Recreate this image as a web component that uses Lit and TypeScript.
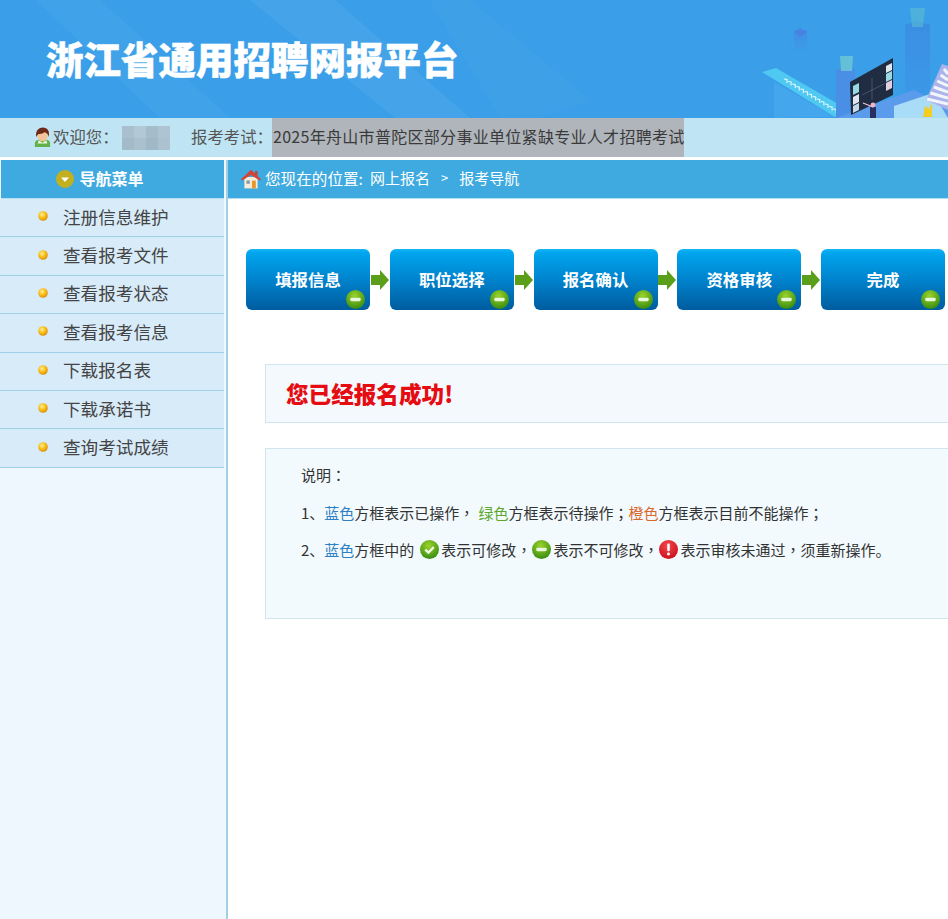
import { LitElement, html, css, svg } from "lit";
import { customElement } from "lit/decorators.js";

const menu = ["注册信息维护", "查看报考文件", "查看报考状态", "查看报考信息", "下载报名表", "下载承诺书", "查询考试成绩"];
const steps = ["填报信息", "职位选择", "报名确认", "资格审核", "完成"];

const blurCells = ["#a9bfce", "#b3c8d6", "#a5bccb", "#aec4d3", "#a3bac9", "#aac0cf", "#a1b8c8", "#acc2d1"];

// full-width punctuation
const COMMA = "\uFF0C";
const SEMI = "\uFF1B";
const COLON = "\uFF1A";

const defs = svg`
  <radialGradient id="gr" cx="45%" cy="30%" r="75%">
    <stop offset="0" stop-color="#9ad32c"/><stop offset="1" stop-color="#33880f"/>
  </radialGradient>
  <radialGradient id="rd" cx="45%" cy="30%" r="75%">
    <stop offset="0" stop-color="#f4474d"/><stop offset="1" stop-color="#c90d18"/>
  </radialGradient>
  <radialGradient id="yl" cx="40%" cy="35%" r="70%">
    <stop offset="0" stop-color="#fff0a0"/><stop offset=".45" stop-color="#fdc31c"/><stop offset="1" stop-color="#d98a06"/>
  </radialGradient>
  <linearGradient id="fade" x1="0" y1="0" x2="0" y2="1">
    <stop offset="0" stop-color="#4a7fe2" stop-opacity=".55"/><stop offset="1" stop-color="#4a7fe2" stop-opacity="0"/>
  </linearGradient>
  <linearGradient id="tower" x1="0" y1="0" x2="0" y2="1">
    <stop offset="0" stop-color="#3b8fe2"/><stop offset="1" stop-color="#3d9bea"/>
  </linearGradient>
`;

const minusIcon = html`<svg viewBox="0 0 18 18" width="19" height="19">
  <circle cx="9" cy="9" r="9" fill="url(#gr)"/><rect x="4" y="7.4" width="10" height="3.2" rx="1.4" fill="#e9f5dc"/>
</svg>`;
const checkIcon = html`<svg viewBox="0 0 18 18" width="19" height="19">
  <circle cx="9" cy="9" r="9" fill="url(#gr)"/><path d="M5 9.2l3 2.8 5-5.2" fill="none" stroke="#f2f9e8" stroke-width="2.2"/>
</svg>`;
const alertIcon = html`<svg viewBox="0 0 18 18" width="19" height="19">
  <circle cx="9" cy="9" r="9" fill="url(#rd)"/><rect x="7.8" y="3.4" width="2.4" height="7.2" rx="1" fill="#fff"/><circle cx="9" cy="13.2" r="1.4" fill="#fff"/>
</svg>`;

@customElement("app-root")
export class AppRoot extends LitElement {
  static styles = css`
    :host {
      display: block;
      min-height: 919px;
      background: #fff;
      overflow: hidden;
      font-family: "Noto Sans CJK SC", "Liberation Sans", sans-serif;
      color: #444;
    }

    .banner {
      position: relative;
      height: 118px;
      display: flex;
      align-items: center;
      padding-left: 46px;
      background: #3a9fe8;
      overflow: hidden;
    }
    .banner-art {
      position: absolute;
      left: 0;
      top: 0;
    }
    .banner h1 {
      position: relative;
      margin: 0 0 3px;
      font-size: 37.5px;
      line-height: 1;
      font-weight: 900;
      color: #fff;
      -webkit-text-stroke: 0.5px #fff;
    }

    .welcome {
      display: flex;
      align-items: stretch;
      height: 39px;
      background: #bfe5f4;
      border-bottom: 3px solid #fff;
      font-size: 16.4px;
      color: #555;
    }
    .welcome .who {
      display: flex;
      align-items: center;
      margin-left: 33px;
      gap: 1px;
      width: 89px;
      white-space: nowrap;
    }
    .welcome span,
    .exam-label,
    .exam {
      padding-bottom: 3px;
    }
    .blur {
      display: grid;
      grid-template-columns: repeat(4, 12px);
      grid-auto-rows: 12px;
      align-self: center;
      margin-right: 21px;
    }
    .exam-label {
      display: flex;
      align-items: center;
      width: 81px;
      white-space: nowrap;
    }
    .exam {
      display: flex;
      align-items: center;
      padding-left: 1px;
      width: 412px;
      box-sizing: border-box;
      background: #b0b5bb;
      color: #3a3a3a;
      font-size: 16px;
      white-space: nowrap;
      letter-spacing: 0.3px;
    }

    .body {
      display: flex;
      min-height: 759px;
    }

    .side {
      box-sizing: border-box;
      width: 228px;
      flex: none;
      background: #eef7fe;
      border-right: 2px solid #a2d0e6;
    }
    .side-head {
      box-sizing: border-box;
      display: flex;
      align-items: center;
      justify-content: center;
      gap: 5px;
      height: 39px;
      margin: 0 2px 0 1px;
      padding: 0 25px 2px 0;
      background: #3eaae0;
      border-bottom: 1px solid #b5def0;
      color: #fff;
      font-size: 16px;
      font-weight: 700;
    }
    .side-head svg {
      margin-bottom: -1px;
    }
    .side ul {
      list-style: none;
      margin: 0;
      padding: 0;
    }
    .side li {
      box-sizing: border-box;
      display: flex;
      align-items: center;
      height: 38.4px;
      margin-right: 2px;
      padding: 0 0 3px 38px;
      background: #d8ebf9;
      border-bottom: 1px solid #9fd0e6;
      font-size: 17.6px;
      color: #444;
    }
    .side li svg {
      margin-right: 15px;
      flex: none;
    }

    .main {
      flex: 1;
      min-width: 0;
    }
    .crumb {
      box-sizing: border-box;
      display: flex;
      align-items: center;
      height: 39px;
      padding: 0 0 3px 13px;
      background: #3eaae0;
      border-bottom: 1px solid #b5def0;
      color: #fff;
      font-size: 15px;
    }
    .crumb svg {
      margin: 2px 4px 0 0;
    }
    .crumb .sep {
      margin: 0 11px;
      font-size: 13px;
    }
    .crumb .here {
      margin-right: 7px;
      font-size: 15.6px;
    }

    .steps {
      display: flex;
      align-items: center;
      margin: 50px 0 0 18px;
    }
    .step {
      position: relative;
      flex: none;
      display: flex;
      align-items: center;
      justify-content: center;
      box-sizing: border-box;
      width: 124px;
      height: 61px;
      padding-bottom: 2px;
      border-radius: 6px;
      background: linear-gradient(#19b4f6 0, #00a6ee 6%, #0083cd 50%, #005c9f 100%);
      color: #fff;
      font-size: 16.4px;
      font-weight: 700;
    }
    .step .badge {
      position: absolute;
      display: flex;
      right: 5px;
      bottom: 1px;
    }
    .arrow {
      flex: none;
      width: 19.75px;
      display: flex;
      justify-content: center;
    }

    .panel {
      margin: 0 -10px 0 37px;
      border: 1px solid #cfe5f0;
    }
    .result {
      display: flex;
      align-items: center;
      box-sizing: border-box;
      height: 59px;
      margin-top: 54px;
      padding: 0 0 1px 20px;
      background: #f4f9fe;
      font-size: 22.6px;
      font-weight: 900;
      color: #e60d12;
    }
    .note {
      box-sizing: border-box;
      height: 171px;
      margin-top: 25px;
      padding: 7px 0 0 35px;
      background: #f2fafe;
      font-size: 15px;
      color: #333;
    }
    .note p {
      display: flex;
      align-items: center;
      height: 37.6px;
      margin: 0;
      white-space: pre;
    }
    .note svg {
      margin: 0 2px 0 1px;
    }
    .note .first {
      display: flex;
      margin-left: 5px;
    }
    /* centred full-width punctuation, the SC face pushes it to the corner */
    .pn { font-family: "Noto Sans CJK TC", "Noto Sans CJK SC", sans-serif; }
    .blue { color: #2f7fc4; }
    .green { color: #5fa72c; margin-left: 4px; }
    .orange { color: #d9682a; }
  `;

  private banner() {
    return html`<svg class="banner-art" width="948" height="118" viewBox="0 0 948 118">
      <polygon points="36,0 100,0 230,118 160,118" fill="#fff" opacity=".035"/>
      <polygon points="250,0 335,0 470,118 395,118" fill="#fff" opacity=".06"/>
      <polygon points="430,0 470,0 590,100 540,118 500,118" fill="#fff" opacity=".025"/>
      <g transform="translate(700 0)">
        <rect x="94" y="30" width="13" height="24" fill="url(#fade)"/>
        <polygon points="94,32 100,28 107,32 100,37" fill="#4a7fe2" opacity=".75"/>
        <rect x="205" y="24" width="25" height="94" fill="url(#tower)"/>
        <polygon points="205,26 217,20 230,26 217,32" fill="#3a8fe2"/>
        <polygon points="210,8 225,8 223,27 212,27" fill="#5cbfd0" opacity=".55"/>
        <polygon points="74,82 135,117 74,118" fill="#44a6ec"/>
        <polygon points="62,72 76,68 145,108 135,117" fill="#4fc8f2"/>
        ${[0, 1, 2, 3, 4, 5, 6, 7, 8, 9, 10, 11, 12].map((i) => svg`
          <polyline points="${84 + i * 4.1},${79 + i * 2.5} ${87 + i * 4.1},${79.5 + i * 2.5} ${87 + i * 4.1},${83 + i * 2.5}"
            fill="none" stroke="#e6fbff" stroke-width="1.1"/>`)}
        <rect x="136" y="69" width="19" height="49" fill="#4a8fe6"/>
        <polygon points="140,56 153,56 152,71 141,71" fill="#6cc5d6" opacity=".85"/>
        <polygon points="136,118 214,90 248,108 248,118" fill="#5b9bec"/>
        <polygon points="150,82 193,58 193,95 151,115" fill="#1f2c42"/>
        <polygon points="153,86 159,83 159,92 153,95" fill="#9ad8e2"/>
        <polygon points="153,97 159,94 159,102 153,105" fill="#dfe6ee"/>
        <polygon points="153,106 159,103 159,110 153,113" fill="#c5d8e4"/>
        <polygon points="186,66 192,63 192,70 186,73" fill="#dfe6ee"/>
        <polygon points="186,74 192,71 192,79 186,82" fill="#9ad8e2"/>
        <polygon points="186,83 192,80 192,88 186,91" fill="#e4cfe0"/>
        <path d="M162 95L184 84M172 78V100" stroke="#56657a" stroke-width=".7" fill="none"/>
        <rect x="170" y="107" width="6" height="11" fill="#27305e"/>
        <circle cx="173" cy="105" r="2.4" fill="#f1b4c4"/>
        <path d="M173 107l-10-4" stroke="#f3c1cf" stroke-width="1.3"/>
        <polygon points="194,106 233,93 248,118 194,118" fill="#a9dcf6"/>
        <polygon points="226,100 242,64 248,66 248,110" fill="#aab4ea"/>
        ${[0, 1, 2, 3, 4, 5].map((i) => svg`
          <line x1="${227 + i * 3.4}" y1="${99 - i * 6}" x2="${248}" y2="${104 - i * 6}" stroke="#f2f5fc" stroke-width="3"/>`)}
        <polygon points="223,117 225,106 229,109 232,103 232,117" fill="#f5cc20"/>
      </g>
    </svg>`;
  }

  private avatar() {
    return html`<svg viewBox="0 0 20 22" width="19" height="21">
      <path d="M2 21v-4c0-3 3-4 8-4s8 1 8 4v4z" fill="#62b24a"/>
      <path d="M6 14l4 2.4L14 14l1 3.4H5z" fill="#eef6df"/>
      <ellipse cx="10" cy="9.4" rx="5.4" ry="5.6" fill="#f3c497"/>
      <path d="M3.4 10.4C2.2 3.4 6.6.4 10.4.4c5 0 7.4 3.6 6.2 10-.8-2.8-2.4-4.4-4.4-4.8-2 1.6-5.4 2-6.8 2-.8.8-1.4 1.6-2 2.8z" fill="#6e2a18"/>
    </svg>`;
  }

  private house() {
    return html`<svg viewBox="0 0 20 20" width="20" height="20">
      <rect x="3.4" y="8" width="13.2" height="11.4" fill="#f6eedb"/>
      <rect x="11" y="11.6" width="3.8" height="7.8" fill="#e8952a"/>
      <rect x="5.4" y="11.4" width="3.4" height="3.4" fill="#8b99a6"/>
      <rect x="14" y="2" width="2.6" height="5" fill="#b9493c"/>
      <path d="M10 .8L0 10.2l1.2 1.4L10 6l8.8 5.6 1.2-1.4z" fill="#d2443a"/>
    </svg>`;
  }

  render() {
    return html`
      <svg width="0" height="0" style="position:absolute"><defs>${defs}</defs></svg>
      <header class="banner">
        ${this.banner()}
        <h1>浙江省通用招聘网报平台</h1>
      </header>

      <div class="welcome">
        <div class="who">${this.avatar()}<span>欢迎您${COLON}</span></div>
        <div class="blur">${blurCells.map((c) => html`<i style="background:${c}"></i>`)}</div>
        <div class="exam-label">报考考试${COLON}</div>
        <div class="exam">2025年舟山市普陀区部分事业单位紧缺专业人才招聘考试</div>
      </div>

      <div class="body">
        <aside class="side">
          <div class="side-head">
            <svg viewBox="0 0 18 18" width="18" height="18">
              <circle cx="9" cy="9" r="9" fill="#c2b01f"/><path d="M5 7.4h8L9 12z" fill="#fff"/>
            </svg>
            导航菜单
          </div>
          <ul>
            ${menu.map((m) => html`<li>
              <svg viewBox="0 0 10 10" width="10" height="10"><circle cx="5" cy="5" r="4.8" fill="url(#yl)"/></svg>
              <span>${m}</span>
            </li>`)}
          </ul>
        </aside>

        <main class="main">
          <div class="crumb">
            ${this.house()}
            <span class="here">您现在的位置:</span><span>网上报名</span><span class="sep">&gt;</span><span>报考导航</span>
          </div>

          <div class="steps">
            ${steps.map((s, i) => html`
              ${i > 0 ? html`<div class="arrow">
                <svg viewBox="0 0 18 20" width="18" height="20"><path d="M0 5h9V0l9 10-9 10v-5H0z" fill="#5a9e1a"/></svg>
              </div>` : ""}
              <div class="step">${s}<span class="badge">${minusIcon}</span></div>
            `)}
          </div>

          <div class="panel result">您已经报名成功!</div>

          <div class="panel note">
            <p>说明<span class="pn">${COLON}</span></p>
            <p>1、<span class="blue">蓝色</span>方框表示已操作<span class="pn">${COMMA}</span><span class="green">绿色</span>方框表示待操作<span class="pn">${SEMI}</span><span class="orange">橙色</span>方框表示目前不能操作<span class="pn">${SEMI}</span></p>
            <p>2、<span class="blue">蓝色</span>方框中的<span class="first">${checkIcon}</span>表示可修改<span class="pn">${COMMA}</span>${minusIcon}表示不可修改<span class="pn">${COMMA}</span>${alertIcon}表示审核未通过<span class="pn">${COMMA}</span>须重新操作。</p>
          </div>
        </main>
      </div>
    `;
  }
}
